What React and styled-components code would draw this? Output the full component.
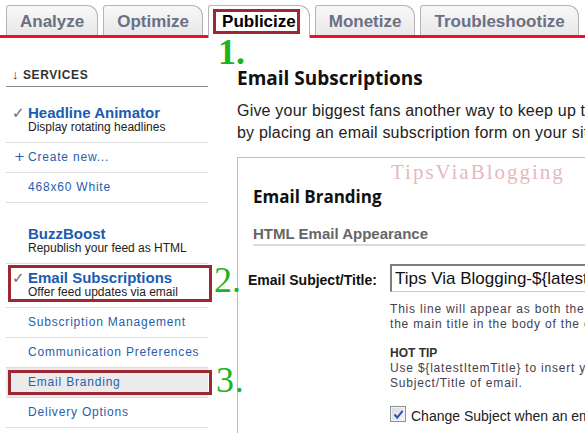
import React from 'react';
import styled, { createGlobalStyle } from 'styled-components';

const GlobalStyle = createGlobalStyle`
  html, body {
    margin: 0;
    padding: 0;
    background: #fff;
  }
  body {
    width: 585px;
    height: 433px;
    overflow: hidden;
    font-family: "Liberation Sans", Arial, sans-serif;
    color: #222;
  }
`;

const Page = styled.div`
  width: 585px;
  height: 433px;
  overflow: hidden;
  display: flex;
  flex-direction: column;
`;

/* ---------- tabs ---------- */

const TabBar = styled.div`
  display: flex;
  align-items: flex-end;
  gap: 5px;
  height: 30px;
  padding: 5px 0 0 6px;
  border-bottom: 3px solid #ec0f2f;
  flex-shrink: 0;
`;

const Tab = styled.div`
  position: relative;
  box-sizing: border-box;
  height: ${(p) => (p.$active ? 33 : 30)}px;
  margin-bottom: ${(p) => (p.$active ? -3 : 0)}px;
  padding: 3px 13px 0;
  line-height: 26px;
  border: 1px solid #b5b5b5;
  border-bottom: none;
  border-radius: 3px 11px 0 0;
  background: ${(p) => (p.$active ? '#fff' : 'linear-gradient(#f8f8f8, #e8e8e8)')};
  color: ${(p) => (p.$active ? '#000' : '#6b7083')};
  font-size: 17px;
  font-weight: bold;
  white-space: nowrap;
`;

/* overlays: red annotation frames and green step numbers */

const Marker = styled.span`
  position: absolute;
  top: ${(p) => p.$top}px;
  left: ${(p) => p.$left}px;
  width: ${(p) => p.$w}px;
  height: ${(p) => p.$h}px;
  box-sizing: border-box;
  border: 3px solid #9d2834;
  z-index: 2;
  pointer-events: none;
`;

const Callout = styled.span`
  position: absolute;
  top: ${(p) => p.$top}px;
  left: ${(p) => p.$left}px;
  z-index: 3;
  font-family: "Liberation Serif", "Times New Roman", serif;
  font-size: 36px;
  line-height: 1;
  color: #1fb31f;
  white-space: nowrap;
  pointer-events: none;
`;

/* ---------- sidebar ---------- */

const Body = styled.div`
  display: flex;
  flex: 1;
  min-height: 0;
`;

const Sidebar = styled.div`
  width: 202px;
  flex-shrink: 0;
  margin-left: 6px;
  padding-top: 30px;
`;

const SideHeader = styled.div`
  display: flex;
  padding: 0 0 4px 6px;
  border-bottom: 1px solid #888;
  font-size: 12px;
  line-height: 14px;
  font-weight: bold;
  letter-spacing: 0.6px;
  color: #333;
`;

const Arrow = styled.span`
  width: 11px;
  font-size: 13px;
  font-weight: normal;
  letter-spacing: 0;
`;

const ServiceRow = styled.div`
  position: relative;
  display: flex;
  margin-top: ${(p) => p.$gap || 0}px;
  padding: 6px 0 8px;
  border-bottom: 1px solid #ddd;
`;

const Icon = styled.span`
  width: 22px;
  flex-shrink: 0;
  box-sizing: border-box;
  padding-left: ${(p) => (p.$plus ? 8 : 6)}px;
  font-family: "DejaVu Sans", sans-serif;
  font-size: ${(p) => (p.$plus ? 13 : 15)}px;
  line-height: ${(p) => (p.$plus ? 'inherit' : '17px')};
  letter-spacing: 0;
  color: ${(p) => (p.$plus ? '#2660ad' : '#6a6a6a')};
`;

const ServiceText = styled.div`
  display: flex;
  flex-direction: column;
`;

const ServiceTitle = styled.span`
  font-size: 15px;
  line-height: 16px;
  font-weight: bold;
  color: #1a5cb0;
`;

const ServiceDesc = styled.span`
  font-size: 12px;
  line-height: 13px;
  color: #222;
`;

const LinkRow = styled.div`
  position: relative;
  display: flex;
  line-height: 28px;
  padding-bottom: 1px;
  border-bottom: 1px solid #ddd;
  background: ${(p) => (p.$selected ? '#ebebeb' : 'transparent')};
  font-size: 12px;
  letter-spacing: 0.8px;
  color: #2660ad;
  white-space: nowrap;
`;

/* ---------- main ---------- */

const Main = styled.div`
  flex: 1;
  min-width: 0;
  margin-left: 29px;
  padding-top: 29px;
  overflow: hidden;
`;

const PageTitle = styled.h1`
  margin: 0;
  font-family: "Open Sans", "Liberation Sans", sans-serif;
  font-size: 19px;
  line-height: 22px;
  font-weight: 700;
  color: #111;
  white-space: nowrap;
`;

const Intro = styled.p`
  margin: 11px 0 0;
  font-size: 16px;
  line-height: 22px;
  letter-spacing: 0.2px;
  color: #222;
  white-space: nowrap;
`;

const Panel = styled.div`
  position: relative;
  width: 600px;
  margin-top: 13px;
  padding: 29px 0 60px 10px;
  border-top: 1px solid #bdbdbd;
  border-left: 1px solid #bdbdbd;
`;

const Watermark = styled.span`
  position: absolute;
  top: 4px;
  left: 153px;
  font-family: "Liberation Serif", "Times New Roman", serif;
  font-size: 21px;
  line-height: 1;
  letter-spacing: 2px;
  color: #e6b9bc;
`;

const PanelTitle = styled.h2`
  margin: 0 0 0 5px;
  font-family: "Open Sans", "Liberation Sans", sans-serif;
  font-size: 17px;
  line-height: 20px;
  font-weight: 700;
  color: #111;
`;

const SectionTitle = styled.h3`
  margin: 18px 0 0 5px;
  padding-bottom: 1px;
  border-bottom: 2px solid #dcdcdc;
  font-size: 15px;
  line-height: 18px;
  font-weight: bold;
  color: #666;
`;

const FormRow = styled.div`
  display: grid;
  grid-template-columns: 142px 1fr;
  margin-top: 18px;
`;

const FieldLabel = styled.label`
  margin-top: 8px;
  font-size: 14px;
  line-height: 16px;
  font-weight: bold;
  color: #111;
  white-space: nowrap;
`;

const FieldColumn = styled.div`
  display: flex;
  flex-direction: column;
  align-items: flex-start;
`;

const TitleInput = styled.input`
  box-sizing: border-box;
  width: 280px;
  height: 28px;
  padding: 0 0 0 3px;
  border: 1px solid #c9c9c9;
  border-top: 2px solid #7d7d7d;
  border-left: 2px solid #7d7d7d;
  background: #fff;
  font-family: "Liberation Sans", Arial, sans-serif;
  font-size: 17px;
  color: #111;
  outline: none;
`;

const Help = styled.p`
  margin: ${(p) => p.$gap}px 0 0;
  font-size: 12px;
  line-height: 15px;
  letter-spacing: 0.8px;
  color: #45404f;
  white-space: nowrap;
`;

const HelpHead = styled.strong`
  letter-spacing: 0;
  color: #333;
`;

const CheckRow = styled.div`
  display: flex;
  align-items: flex-start;
  gap: 5px;
  margin-top: 16px;
  font-size: 14px;
  line-height: 18px;
  color: #222;
  white-space: nowrap;
`;

const CheckBox = styled.span`
  box-sizing: border-box;
  width: 16px;
  height: 16px;
  margin-top: -1px;
  flex-shrink: 0;
  display: inline-flex;
  align-items: center;
  justify-content: center;
  border: 1px solid #8e9095;
  box-shadow: inset 0 0 0 1px #f4f4f4;
  background: linear-gradient(135deg, #d6d9de, #f6f6f6);
`;

const services = [
  { title: 'Headline Animator', desc: 'Display rotating headlines', checked: true, gap: 12 },
];

const App = () => {
  return (
    <Page>
      <GlobalStyle />
      <TabBar>
        <Tab>Analyze</Tab>
        <Tab>Optimize</Tab>
        <Tab $active>
          Publicize
          <Marker $top={3} $left={4} $w={87} $h={25} />
          <Callout $top={28} $left={9}>1.</Callout>
        </Tab>
        <Tab>Monetize</Tab>
        <Tab>Troubleshootize</Tab>
      </TabBar>

      <Body>
        <Sidebar>
          <SideHeader>
            <Arrow>↓</Arrow>SERVICES
          </SideHeader>

          {services.map((s) => (
            <ServiceRow key={s.title} $gap={s.gap}>
              <Icon>{s.checked ? '✓' : ''}</Icon>
              <ServiceText>
                <ServiceTitle>{s.title}</ServiceTitle>
                <ServiceDesc>{s.desc}</ServiceDesc>
              </ServiceText>
            </ServiceRow>
          ))}
          <LinkRow>
            <Icon $plus>+</Icon>Create new...
          </LinkRow>
          <LinkRow>
            <Icon />468x60 White
          </LinkRow>

          <ServiceRow $gap={17}>
            <Icon />
            <ServiceText>
              <ServiceTitle>BuzzBoost</ServiceTitle>
              <ServiceDesc>Republish your feed as HTML</ServiceDesc>
            </ServiceText>
          </ServiceRow>
          <ServiceRow>
            <Icon>✓</Icon>
            <ServiceText>
              <ServiceTitle>Email Subscriptions</ServiceTitle>
              <ServiceDesc>Offer feed updates via email</ServiceDesc>
            </ServiceText>
            <Marker $top={1} $left={2} $w={204} $h={37} />
            <Callout $top={-2} $left={208}>2.</Callout>
          </ServiceRow>
          <LinkRow>
            <Icon />Subscription Management
          </LinkRow>
          <LinkRow>
            <Icon />Communication Preferences
          </LinkRow>
          <LinkRow $selected>
            <Icon />Email Branding
            <Marker $top={2} $left={2} $w={204} $h={25} />
            <Callout $top={-6} $left={210}>3.</Callout>
          </LinkRow>
          <LinkRow>
            <Icon />Delivery Options
          </LinkRow>
        </Sidebar>

        <Main>
          <PageTitle>Email Subscriptions</PageTitle>
          <Intro>
            Give your biggest fans another way to keep up to date with your feed
            <br />
            by placing an email subscription form on your site.
          </Intro>

          <Panel>
            <Watermark>TipsViaBlogging</Watermark>
            <PanelTitle>Email Branding</PanelTitle>
            <SectionTitle>HTML Email Appearance</SectionTitle>

            <FormRow>
              <FieldLabel>Email Subject/Title:</FieldLabel>
              <FieldColumn>
                <TitleInput readOnly value={'Tips Via Blogging-${latestItemTitle}'} />
                <Help $gap={10}>
                  This line will appear as both the subject line of the email and
                  <br />
                  the main title in the body of the email.
                </Help>
                <Help $gap={14}>
                  <HelpHead>HOT TIP</HelpHead>
                  <br />
                  Use {'${latestItemTitle}'} to insert your latest item's title in the
                  <br />
                  Subject/Title of email.
                </Help>
                <CheckRow>
                  <CheckBox>
                    <svg width="11" height="11" viewBox="0 0 11 11">
                      <path d="M1.5 5.5 L4.2 8.6 L9.6 1.8" fill="none" stroke="#2d4fc0" strokeWidth="2" />
                    </svg>
                  </CheckBox>
                  Change Subject when an email is sent
                </CheckRow>
              </FieldColumn>
            </FormRow>
          </Panel>
        </Main>
      </Body>
    </Page>
  );
};

export default App;
